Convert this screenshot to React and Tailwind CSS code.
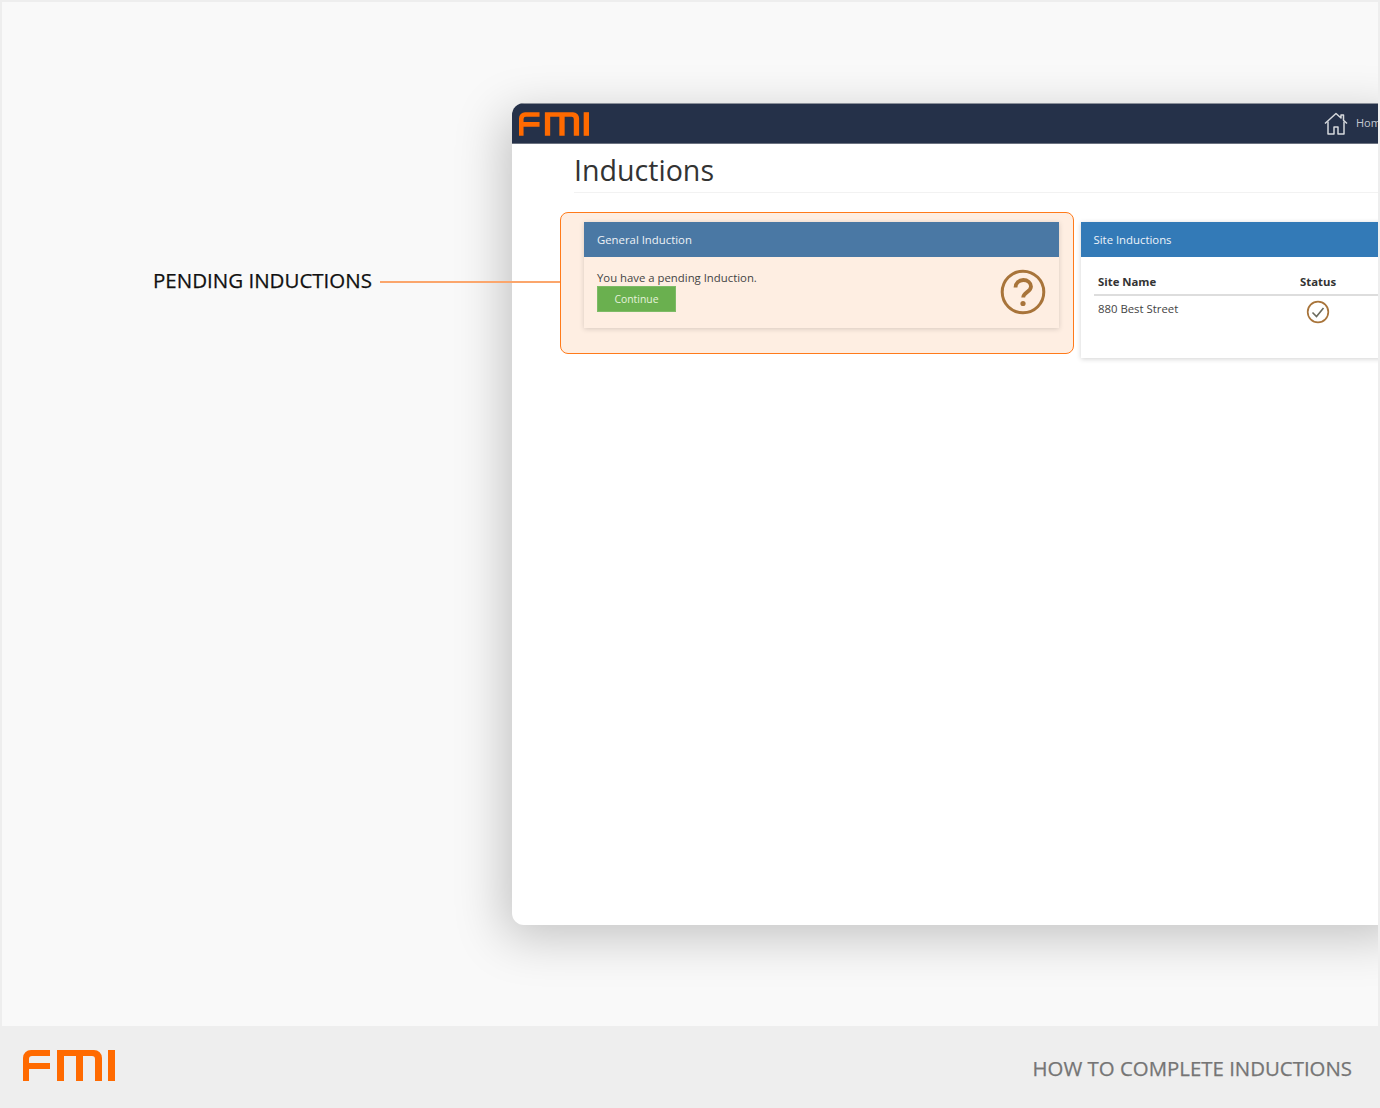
import React from 'react';

const font = "font-['Open_Sans',sans-serif]";

const FmiLogo = ({ className }) => (
  <svg className={className} viewBox="0 0 92 31" fill="#ff6a00">
    <path d="M0 31V8a8 8 0 0 1 8-8h19v6H9a3 3 0 0 0-3 3v4h21v6H6V31z" />
    <path d="M34 0h37a8 8 0 0 1 8 8v23h-7V9a3 3 0 0 0-3-3H60v25h-7V6H41v25h-7z" />
    <rect x="85" y="0" width="7" height="31" />
  </svg>
);

const HomeIcon = () => (
  <svg className="w-6 h-6" viewBox="0 0 24 24" fill="none" stroke="#d5d8dc" strokeWidth="1.500" strokeLinejoin="round">
    <path d="M1 11.500 12 1.500l5 4.500V3h2.500v5.300l3.500 3.200" />
    <path d="M4 9.500V22h6v-7h4v7h6V9.500" />
  </svg>
);

const QuestionIcon = () => (
  <svg className="w-[46px] h-[46px]" viewBox="0 0 46 46" fill="none" stroke="#a8743a">
    <circle cx="23" cy="23" r="20.800" strokeWidth="3" />
    <path d="M15.500 18.500c0-4.500 3.500-7.500 7.800-7.500s7.700 2.800 7.700 6.500c0 5.500-7.800 5.700-7.800 11" strokeWidth="3.800" />
    <circle cx="23" cy="34.500" r="2.600" fill="#a8743a" stroke="none" />
  </svg>
);

const CheckIcon = () => (
  <svg className="w-[24px] h-[24px]" viewBox="0 0 24 24" fill="none" stroke="#a8743a" strokeWidth="1.700">
    <circle cx="12" cy="12" r="10.300" />
    <path d="M6.500 12.500l4 4 7-8.500" stroke="#6b6b5e" strokeWidth="1.600" />
  </svg>
);

const App = () => {
  return (
    <div className={`w-[1380px] h-[1108px] bg-[#eeeeee] p-[2px] flex flex-col relative overflow-hidden ${font}`}>
      {/* main area */}
      <div className="h-[1024px] bg-[#f9f9f9] overflow-hidden pl-[510px] pt-[101px] shrink-0">
        <div className="w-[900px] h-[822px] bg-white rounded-xl shadow-[-8px_12px_50px_rgba(0,0,0,0.22)] overflow-hidden">
          <div className="h-[41px] bg-[#253149] border-b border-[#6b7280] border-t border-t-[#8a8f99] flex items-center pl-[7px]">
            <FmiLogo className="w-[70px] h-6" />
            <div className="ml-[735px] flex items-center gap-2 shrink-0">
              <HomeIcon />
              <span className="text-[11px] text-[#c5c9d0]">Home</span>
            </div>
          </div>
          <div className="ml-[62px] h-[49px] border-b border-[#f2f2f2]">
            <h1 className="text-[28.600px] leading-[52px] text-[#333333]">Inductions</h1>
          </div>
          <div className="flex pl-12 pt-[19px] items-start">
            <div className="w-[514px] h-[142px] shrink-0 bg-[#feeee2] border border-[#ff7a1a] rounded-lg pl-[23px] pt-[9px]">
              <div className="w-[475px] h-[106px] bg-[#feeee2] shadow-[0_1px_5px_rgba(0,0,0,0.16)]">
                <div className="h-[35px] bg-[#4a78a4] px-[13px] text-[11.350px] leading-[35px] text-[#eef2f6]">General Induction</div>
                <div className="flex justify-between items-start pl-[13px] pr-[13px] pt-[13px]">
                  <div>
                    <p className="text-[11.350px] leading-4 text-[#444444]">You have a pending Induction.</p>
                    <button className="block w-[79px] h-[26px] pt-[2px] bg-[#6ab04f] text-[10.400px] text-[#e6f2dc] border border-[#7dbb66]">Continue</button>
                  </div>
                  <div className="-mt-[1px] mr-0"><QuestionIcon /></div>
                </div>
              </div>
            </div>
            <div className="ml-[6.500px] mt-[10px] w-[400px] h-[136px] shrink-0 bg-white shadow-[0_1px_5px_rgba(0,0,0,0.18)]">
              <div className="h-[35px] bg-[#337ab7] px-[13px] text-[11.350px] leading-[35px] text-[#eef4fa]">Site Inductions</div>
              <div className="ml-[13px] mt-[15px] flex border-b-2 border-[#dddddd] h-[24px] text-[11.350px] font-bold text-[#333333] leading-[20px] pl-[4.500px]">
                <span className="w-[202px]">Site Name</span>
                <span>Status</span>
              </div>
              <div className="ml-[17.500px] flex text-[11.350px] text-[#444444]">
                <span className="w-[208px] pt-[5px] leading-4">880 Best Street</span>
                <div className="pt-[4px]"><CheckIcon /></div>
              </div>
            </div>
          </div>
        </div>
      </div>
      {/* footer */}
      <div className="h-20 bg-[#eeeeee] flex items-center justify-between pl-[21px] pr-[26px]">
        <FmiLogo className="w-[92px] h-[31px] -mt-[2px]" />
        <span className="text-[20.400px] [-webkit-text-stroke:0.25px] text-[#757575] mt-[5px]">HOW TO COMPLETE INDUCTIONS</span>
      </div>
      {/* callout */}
      <div className="absolute left-[153px] top-[266px] flex items-center">
        <span className="text-[20.500px] [-webkit-text-stroke:0.25px] leading-7 text-[#111111]">PENDING INDUCTIONS</span>
        <div className="ml-2 w-[180px] h-[1.500px] bg-[#fba66c] mt-[4px]" />
      </div>
    </div>
  );
};

export default App;
